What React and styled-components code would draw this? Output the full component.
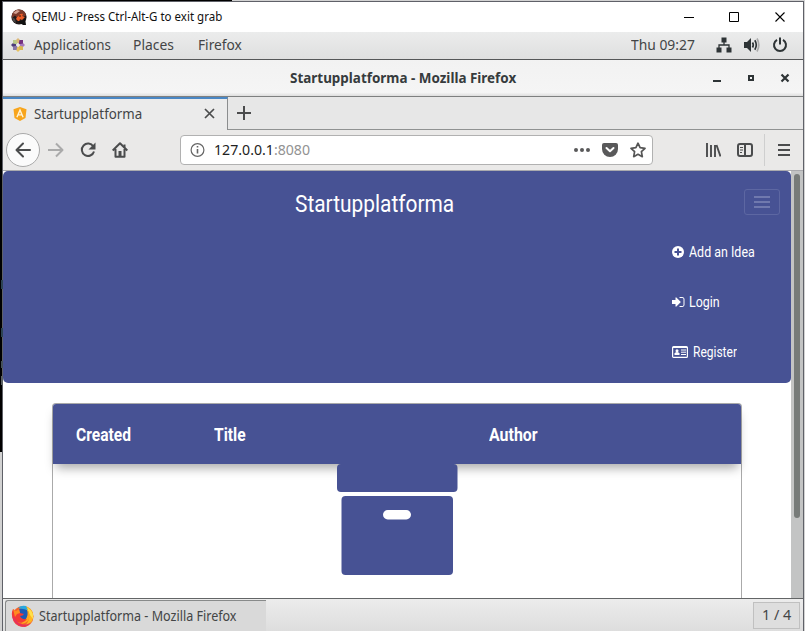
import React from 'react';
import styled, { createGlobalStyle } from 'styled-components';

const Global = createGlobalStyle`
  * { box-sizing: border-box; }
  body { margin: 0; overflow: hidden; background: #e4e4e4; }
  svg { display: block; flex: none; }
`;

const indigo = '#475294';
const ui = '"Noto Sans", "Open Sans", sans-serif';

const Desktop = styled.div`
  position: relative;
  width: 805px;
  height: 631px;
  overflow: hidden;
  padding: 1px 1px 0 2px;
  background: linear-gradient(#000, #000) 0 0 / 232px 2px no-repeat,
    linear-gradient(#000, #000) 0 0 / 3px 452px no-repeat, #d2d2d2;
`;
const Fragment = styled.span`
  position: absolute;
  left: 1px;
  top: ${p => p.$top}px;
  width: 2px;
  height: ${p => p.$h}px;
  background: ${p => p.$color};
`;
const Window = styled.div`
  width: 802px;
  height: 631px;
  display: flex;
  flex-direction: column;
  border: 1px solid #5f6168;
  border-bottom: 0;
  background: #fff;
`;
const Label = styled.span`
  display: block;
  flex: none;
  width: ${p => p.$w}px;
  white-space: nowrap;
  font-family: ${p => p.$font || ui};
  font-size: ${p => p.$size || 14}px;
  font-weight: ${p => p.$weight || 400};
  line-height: 20px;
  color: ${p => p.$color || '#434546'};
`;
const Glyphs = styled.span`
  display: inline-block;
  transform: scaleX(${p => p.$sx});
  transform-origin: 0 50%;
`;
const Text = ({ sx = 1, children, ...rest }) => (
  <Label {...rest}><Glyphs $sx={sx}>{children}</Glyphs></Label>
);

const HostBar = styled.header`
  height: 30px;
  flex: none;
  display: flex;
  align-items: center;
  padding: 0 17px 0 8px;
  background: #fff;
`;
const Spacer = styled.div`flex: 1;`;
const Gap = styled.div`width: ${p => p.$w}px; flex: none;`;
const Panel = styled.nav`
  height: 28px;
  flex: none;
  display: flex;
  align-items: center;
  padding: 0 15px 2px 8px;
  background: linear-gradient(#ebecec, #dfdfdf);
  border-bottom: 1px solid #555758;
`;
const TitleBar = styled.div`
  height: 37px;
  flex: none;
  display: flex;
  align-items: center;
  padding: 0 13px 0 287px;
  background: linear-gradient(#f2f2f2, #f5f5f5 90%, #dedede);
  border-bottom: 1px solid #7e8080;
`;
const TabStrip = styled.div`
  height: 33px;
  flex: none;
  display: flex;
  background: #e7e7e7;
`;
const Tab = styled.div`
  width: 225px;
  display: flex;
  align-items: center;
  padding: 0 12px 2px 10px;
  background: #ebebeb;
  border-top: 2px solid #4a87c4;
  border-right: 1px solid #8b8d8e;
`;
const NewTab = styled.div`
  flex: 1;
  display: flex;
  align-items: center;
  padding-left: 9px;
  border-bottom: 1px solid #909292;
`;
const Toolbar = styled.div`
  height: 40px;
  flex: none;
  display: flex;
  align-items: center;
  padding: 0 12px 0 3px;
  background: #eae9e8;
`;
const Back = styled.div`
  width: 34px;
  height: 34px;
  display: grid;
  place-items: center;
  border: 1px solid #a9a9a9;
  border-radius: 50%;
  background: #fbfbfb;
`;
const UrlField = styled.div`
  width: 473px;
  height: 30px;
  display: flex;
  align-items: center;
  padding: 0 6px 0 9px;
  border: 1px solid #b1b1b1;
  border-radius: 4px;
  background: #fff;
`;
const Port = styled.span`color: #929292;`;
const Divider = styled.div`width: 1px; height: 32px; background: #cfcfcf;`;

const Viewport = styled.main`
  height: 429px;
  flex: none;
  display: flex;
  border-bottom: 1px solid #636566;
  border-top: 1px solid #aaaaae;
  background: #fff;
`;
const Page = styled.div`
  width: 788px;
  flex: none;
  overflow: hidden;
`;
const Scroll = styled.div`
  flex: 1;
  padding: 3px 3px 0;
  background: #c3c4c4;
`;
const Thumb = styled.div`
  width: 6px;
  height: 344px;
  border-radius: 3px;
  background: #777b79;
`;
const Navbar = styled.section`
  height: 212px;
  padding: 18px 11px 0 292px;
  border-radius: 5px;
  background: ${indigo};
`;
const Brand = styled.div`
  display: flex;
  justify-content: space-between;
  align-items: flex-start;
  height: 38px;
`;
const BrandName = styled.div`padding-top: 5px;`;
const Toggler = styled.div`
  width: 36px;
  height: 26px;
  display: grid;
  place-items: center;
  border: 1px solid #5d67a2;
  border-radius: 3px;
`;
const Links = styled.div`
  display: grid;
  grid-template-rows: repeat(3, 50px);
  padding-left: 377px;
`;
const Link = styled.div`
  display: flex;
  align-items: center;
  gap: ${p => p.$gap || 5}px;
`;
const Table = styled.section`
  width: 690px;
  height: 240px;
  margin: 20px 0 0 49px;
  border: 1px solid #aaa;
  border-bottom: 0;
  border-radius: 4px 4px 0 0;
`;
const HeadRow = styled.div`
  height: 60px;
  display: grid;
  grid-template-columns: 138px 275px 1fr;
  align-items: center;
  padding: 2px 0 0 23px;
  border-radius: 3px 3px 0 0;
  background: ${indigo};
  box-shadow: 0 7px 10px -3px rgba(0, 0, 0, 0.34);
`;
const Loader = styled.div`
  position: relative;
  width: 121px;
  margin-left: 284px;
`;
const Taskbar = styled.footer`
  flex: 1;
  display: flex;
  justify-content: space-between;
  padding: 1px 3px 0 2px;
  background: linear-gradient(#ececec, #dddddd);
`;
const Task = styled.div`
  width: 261px;
  height: 32px;
  display: flex;
  align-items: center;
  gap: 5px;
  padding: 0 0 1px 5px;
  border: solid #888a8a;
  border-width: 1px 0 0 1px;
  border-radius: 3px 0 0 0;
  background: #d9d9d9;
`;
const Pager = styled.div`
  width: 47px;
  height: 27px;
  margin-top: 2px;
  display: flex;
  align-items: center;
  padding: 0 0 2px 8px;
  border: 1px solid #c0c0c0;
  background: #dedede;
`;

const Svg = ({ w = 16, h = 16, box, color = '#4b4c4d', sw = 2, children }) => (
  <svg width={w} height={h} viewBox={box || `0 0 ${w} ${h}`} fill="none" stroke={color} strokeWidth={sw}>{children}</svg>
);

const QemuIcon = () => (
  <Svg sw="0">
    <circle cx="8" cy="8" r="7.6" fill="#211918" />
    <path d="M1 9C0 4 4 0 8 .5c4 0 7 3 7 6l-3 1-2 3-3-1-3-3z" fill="#7d3a2a" />
    <path d="M2 4l4-3 3 1-4 3z" fill="#d3a292" />
    <path d="M6 8c2 0 2-4 6-3l-1 2 3 1-3 3-2-1-1 3-3-3z" fill="#ee5e28" />
    <path d="M6 12l5 0 3-3 1 7h-3l-3-2z" fill="#111" />
    <path d="M1 8l3 2 1 4-3-2z" fill="#4a4645" />
    <circle cx="9" cy="7" r=".8" fill="#111" />
  </Svg>
);
const CentosIcon = () => (
  <Svg w={14} h={14} sw="0">
    <path d="M7 0l2.500 2.500V5H4.500V2.500z" fill="#dcb878" />
    <path d="M14 7l-2.500 2.500H9v-5h2.500z" fill="#a679bd" />
    <path d="M7 14l-2.500-2.500V9h5v2.500z" fill="#e8c15e" />
    <path d="M0 7l2.500-2.500H5v5H2.500z" fill="#4c3b7a" />
    <path d="M2 2h3.500l1 4.500L2 5.500z" fill="#b9c98a" />
    <path d="M12 2v3.500l-4.500 1L8.500 2z" fill="#74307f" />
    <path d="M12 12H8.500l-1-4.500 4.500 1z" fill="#d8b850" />
    <path d="M2 12V8.500l4.500-1-1 4.500z" fill="#8a78a8" />
    <circle cx="7" cy="7" r="1.500" fill="#efe8ee" />
  </Svg>
);
const NetworkIcon = () => (
  <Svg w={16} h={16} sw="1" color="#2e3436">
    <path d="M5.500.5h5v5h-5zM.5 10.500h5v5h-5zM10.500 10.500h5v5h-5z" fill="#2e3436" stroke="none" />
    <path d="M8 5v3M3 11V8h10v3" strokeWidth="1.300" />
  </Svg>
);
const VolumeIcon = () => (
  <Svg w={16} h={16} sw="1.700" color="#2e3436">
    <path d="M0 5h3l4-4v14l-4-4H0z" fill="#2e3436" stroke="none" />
    <path d="M8.500 5.500q1.600 2.500 0 5M10.800 3.300q3 4.700 0 9.400" />
    <path d="M13 1.500q3.600 6.500 0 13" stroke="#aaa" />
  </Svg>
);
const PowerIcon = () => (
  <Svg w={16} h={16} color="#2e3436">
    <path d="M5 2.800a6 6 0 1 0 6 0M8 .5v7" />
  </Svg>
);
const AngularIcon = () => (
  <Svg w={14} h={14} sw="0">
    <path d="M7 0l6.500 2.300-1 8.700L7 14l-5.500-3L.5 2.300z" fill="#f8a51c" />
    <path d="M3.900 10.200L7 3.100l3.100 7.100M5 7.900h4" stroke="#fff3d5" strokeWidth="1.400" />
  </Svg>
);
const FirefoxIcon = () => (
  <Svg w={23} h={23} sw="0">
    <circle cx="12" cy="11.500" r="10.500" fill="#f5632b" />
    <path d="M13 1c7 1 10 6 9 12-1 5-5 9-10 9 5-3 8-9 4-14z" fill="#ffb51f" />
    <path d="M16 3c4 1 7 6 6 11-2-2-3-5-6-7z" fill="#ffe04a" />
    <circle cx="11.500" cy="9.500" r="6.300" fill="#1c5bb8" />
    <path d="M7 3q3-3 8-2l2 4-5-1z" fill="#27a8e0" />
    <path d="M16 4q5 6 1 12-3 3-7 3l4-4q4-4 2-11z" fill="#ffa51f" />
    <path d="M2 4l3 2 3-2 1 4 4 1q-1 2-4 2 2 4 7 3-3 4-8 3C2 16-1 10 2 4z" fill="#f43a36" />
    <path d="M2 4l3 2 3-2 1 4-3 1-2 3z" fill="#ff8b20" />
    <path d="M1 11c1 8 8 11 13 11 3-1 5-3 6-5-6 5-14 2-16-4z" fill="#e8325a" />
  </Svg>
);
const SignInIcon = () => (
  <Svg w={13} h={14} box="64 0 1664 1792" sw="0">
    <path fill="#fff" d="M1184 896q0 26-19 45l-544 544q-19 19-45 19t-45-19-19-45v-288h-448q-26 0-45-19t-19-45v-384q0-26 19-45t45-19h448v-288q0-26 19-45t45-19 45 19l544 544q19 19 19 45zm480-352v704q0 119-84.500 203.500t-203.500 84.500h-320q-13 0-22.500-9.500t-9.500-22.500q0-4-1-20t-.5-26.500 3-23.500 10-19.500 20.500-6.500h320q66 0 113-47t47-113v-704q0-66-47-113t-113-47h-312l-11.500-1-11.500-3-8-5.500-7-9-2-13.500q0-4-1-20t-.5-26.500 3-23.500 10-19.500 20.500-6.500h320q119 0 203.500 84.500t84.500 203.500z" />
  </Svg>
);

const white = { $font: 'Roboto, sans-serif', $color: '#fff' };

export default function App() {
  return (
    <Desktop>
      <Global />
      <Fragment $top={280} $h={9} $color="#2d4353" />
      <Fragment $top={328} $h={9} $color="#2d4353" />
      <Fragment $top={361} $h={7} $color="#46515a" />
      <Fragment $top={376} $h={9} $color="#5b6062" />
      <Window>
        <HostBar>
          <QemuIcon />
          <Gap $w={5} />
          <Text $w={200} $size={12} $color="#111" sx={0.96}>QEMU - Press Ctrl-Alt-G to exit grab</Text>
          <Spacer />
          <Svg w={11} h={11} sw="1" color="#000"><path d="M0 5.500h10" /></Svg>
          <Gap $w={34} />
          <Svg w={11} h={11} sw="1" color="#000"><path d="M.5.5h9v9h-9z" /></Svg>
          <Gap $w={35} />
          <Svg w={11} h={11} sw="1.100" color="#000"><path d="M.5.5l9 9M9.500.5l-9 9" /></Svg>
        </HostBar>
        <Panel>
          <CentosIcon />
          <Gap $w={9} />
          <Text $w={99} sx={0.955}>Applications</Text>
          <Text $w={65} sx={0.99}>Places</Text>
          <Text $w={60} sx={0.98}>Firefox</Text>
          <Spacer />
          <Text $w={85} sx={0.99}>Thu 09:27</Text>
          <NetworkIcon />
          <Gap $w={12} />
          <VolumeIcon />
          <Gap $w={12} />
          <PowerIcon />
        </Panel>
        <TitleBar>
          <Text $w={250} $weight={700} $color="#363b3d" sx={0.96}>Startupplatforma - Mozilla Firefox</Text>
          <Spacer />
          <Svg w={10} h={10} color="#2e3436"><path d="M1 8h8" /></Svg>
          <Gap $w={25} />
          <Svg w={8} h={10} color="#2e3436"><path d="M2 3h4v4H2z" /></Svg>
          <Gap $w={25} />
          <Svg w={10} h={10} sw="2.200" color="#2e3436"><path d="M1.500 1.500l7 7M8.500 1.500l-7 7" /></Svg>
        </TitleBar>
        <TabStrip>
          <Tab>
            <AngularIcon />
            <Gap $w={7} />
            <Text $w={110} sx={0.95}>Startupplatforma</Text>
            <Spacer />
            <Svg w={11} h={11} sw="1.700"><path d="M1 1l9 9M10 1l-9 9" /></Svg>
          </Tab>
          <NewTab><Svg w={15} h={15}><path d="M7 0v14M0 7h14" /></Svg></NewTab>
        </TabStrip>
        <Toolbar>
          <Back><Svg><path d="M15 8H2M8 1.500L1.500 8 8 14.500" strokeLinecap="round" strokeLinejoin="round" /></Svg></Back>
          <Gap $w={8} />
          <Svg color="#aaa"><path d="M0 8h14M8 1.500L14.500 8 8 14.500" strokeLinejoin="round" /></Svg>
          <Gap $w={16} />
          <Svg><path d="M13.300 4.500A6.200 6.200 0 1 0 14 9.500" /><path d="M15.500.5v7h-7z" fill="#4b4c4d" stroke="none" /></Svg>
          <Gap $w={16} />
          <Svg><path d="M.7 8.500L8 1.300l7.300 7.200M3.500 7v7.800h9V7" strokeLinejoin="round" /><path d="M6.500 9h3v6h-3z" fill="#4b4c4d" stroke="none" /><path d="M12.500 2.500v3" /></Svg>
          <Gap $w={52} />
          <UrlField>
            <Svg sw="1.200" color="#666"><circle cx="7.500" cy="8" r="6.400" /><path d="M7.500 7v4.500M7.500 4v1.500" strokeWidth="1.600" /></Svg>
            <Gap $w={8} />
            <Text $w={110} $color="#222" sx={1.01}>127.0.0.1<Port>:8080</Port></Text>
            <Spacer />
            <Svg w={16} h={16} sw="0"><g fill="#59595a"><circle cx="2" cy="8" r="2" /><circle cx="8" cy="8" r="2" /><circle cx="14" cy="8" r="2" /></g></Svg>
            <Gap $w={12} />
            <Svg><path d="M2 1h12q2 0 2 2v4a8 8 0 0 1-16 0V3q0-2 2-2z" fill="#59595a" stroke="none" /><path d="M4.500 6L8 9.300 11.500 6" stroke="#fff" strokeLinecap="round" strokeLinejoin="round" /></Svg>
            <Gap $w={12} />
            <Svg color="#555" sw="1.700"><path d="M8 1.200l2.100 4.500 4.900.6-3.600 3.400.9 5L8 12.300l-4.300 2.400.9-5L1 6.300l4.900-.6z" strokeLinejoin="round" /></Svg>
          </UrlField>
          <Gap $w={52} />
          <Svg><path d="M2 1v14M6 3v12M10 3v12M11.500 3l4 11.500" strokeWidth="1.900" /></Svg>
          <Gap $w={16} />
          <Svg><rect x="1" y="2" width="14" height="12" rx="2" /><path d="M8 2v12" /><path d="M3 5.500h3M3 8h3M3 10.500h2" strokeWidth="1" /></Svg>
          <Gap $w={11} />
          <Divider />
          <Gap $w={13} />
          <Svg w={12} h={14}><path d="M0 2h12M0 7h12M0 12h12" /></Svg>
        </Toolbar>
        <Viewport>
          <Page>
            <Navbar>
              <Brand>
                <BrandName><Text {...white} $w={180} $size={24} sx={0.87}>Startupplatforma</Text></BrandName>
                <Toggler><Svg w={16} h={14} color="#7f87b6" sw="1.600"><path d="M0 2h16M0 7h16M0 12h16" /></Svg></Toggler>
              </Brand>
              <Links>
                <Link>
                  <Svg w={12} h={12} sw="0"><circle cx="6" cy="6" r="6" fill="#fff" /><path d="M6 2.500v7M2.500 6h7" stroke={indigo} strokeWidth="2" /></Svg>
                  <Text {...white} $w={80} $size={15} sx={0.83}>Add an Idea</Text>
                </Link>
                <Link $gap={4}><SignInIcon /><Text {...white} $w={60} $size={15} sx={0.83}>Login</Text></Link>
                <Link>
                  <Svg w={16} h={12} sw="1.200" color="#fff">
                    <rect x=".6" y=".6" width="14.800" height="10.800" rx="1" /><path d="M1 1.400h14" />
                    <circle cx="5" cy="4.700" r="1.500" fill="#fff" stroke="none" /><path d="M2.500 9V7.500Q3 6 5 6t2.500 1.500V9z" fill="#fff" stroke="none" />
                    <path d="M9 4h5M9 6.200h5M9 8.500h5" strokeWidth="1" />
                  </Svg>
                  <Text {...white} $w={60} $size={15} sx={0.8}>Register</Text>
                </Link>
              </Links>
            </Navbar>
            <Table>
              <HeadRow>
                <Text {...white} $size={18} $weight={700} sx={0.865}>Created</Text>
                <Text {...white} $size={18} $weight={700} sx={0.865}>Title</Text>
                <Text {...white} $size={18} $weight={700} sx={0.885}>Author</Text>
              </HeadRow>
              <Loader>
                <Svg w={121} h={112} sw="0">
                  <rect width="120.500" height="28" rx="4" fill={indigo} />
                  <rect x="4.500" y="32" width="111.500" height="79" rx="4" fill={indigo} />
                  <rect x="46" y="46" width="28" height="9.500" rx="4.700" fill="#fff" />
                </Svg>
              </Loader>
            </Table>
          </Page>
          <Scroll><Thumb /></Scroll>
        </Viewport>
        <Taskbar>
          <Task><FirefoxIcon /><Text $w={210} $size={13.5} sx={0.93}>Startupplatforma - Mozilla Firefox</Text></Task>
          <Pager><Text $w={32} sx={1.03}>1 / 4</Text></Pager>
        </Taskbar>
      </Window>
    </Desktop>
  );
}
